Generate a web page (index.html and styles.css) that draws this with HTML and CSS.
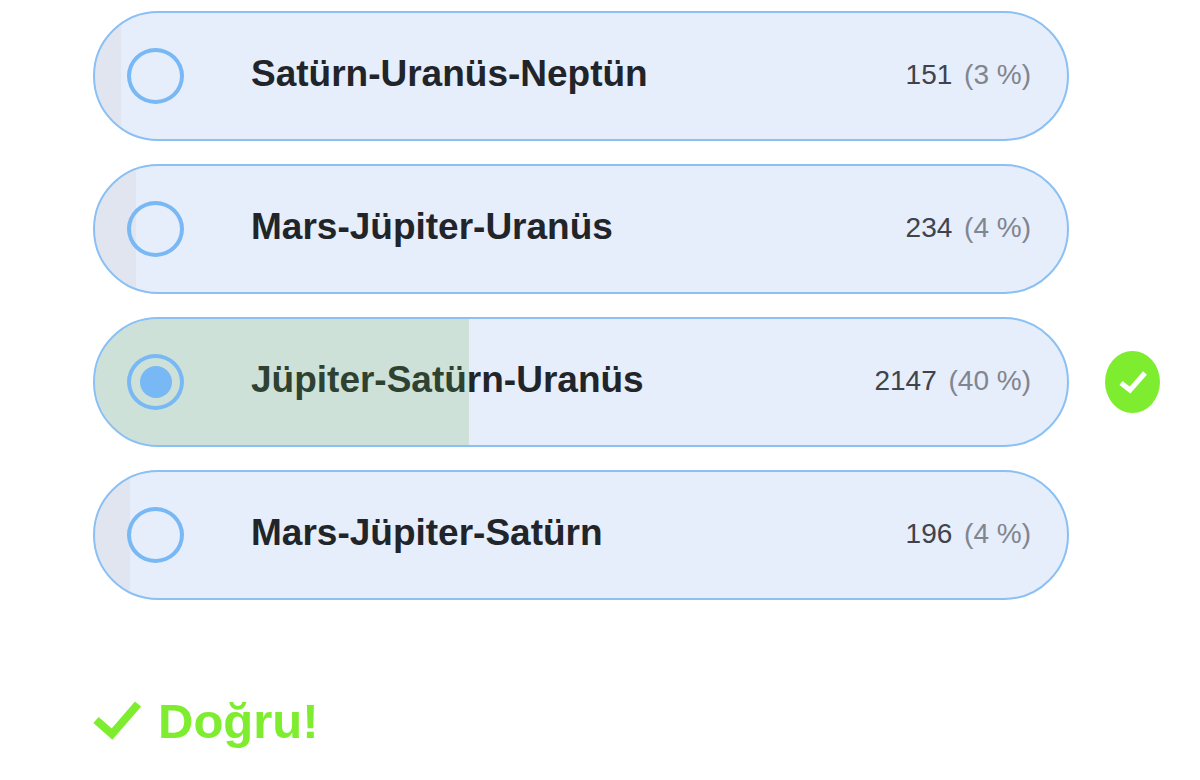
FILE: index.html
```html
<!DOCTYPE html>
<html lang="tr">
<head>
<meta charset="utf-8">
<meta name="viewport" content="width=device-width, initial-scale=1">
<title>Anket</title>
<link rel="stylesheet" href="styles.css">
</head>
<body>
<main class="poll">
  <div class="answers" role="radiogroup">
    <div class="answer">
      <label class="option">
        <input class="option-radio" type="radio" name="answer">
        <span class="option-name">Satürn-Uranüs-Neptün</span>
        <span class="option-votes">151 <span class="option-share">(3 %)</span></span>
        <span class="option-fill" style="width: 2.7%"></span>
      </label>
    </div>
    <div class="answer">
      <label class="option">
        <input class="option-radio" type="radio" name="answer">
        <span class="option-name">Mars-Jüpiter-Uranüs</span>
        <span class="option-votes">234 <span class="option-share">(4 %)</span></span>
        <span class="option-fill" style="width: 4.2%"></span>
      </label>
    </div>
    <div class="answer">
      <label class="option">
        <input class="option-radio" type="radio" name="answer" checked>
        <span class="option-name">Jüpiter-Satürn-Uranüs</span>
        <span class="option-votes">2147 <span class="option-share">(40 %)</span></span>
        <span class="option-fill option-fill-correct" style="width: 38.5%"></span>
      </label>
      <span class="badge">
        <svg class="badge-icon" viewBox="0 0 28 24" aria-hidden="true"><path d="M2 13L11 20L26 3" fill="none" stroke="#fff" stroke-width="5"/></svg>
      </span>
    </div>
    <div class="answer">
      <label class="option">
        <input class="option-radio" type="radio" name="answer">
        <span class="option-name">Mars-Jüpiter-Satürn</span>
        <span class="option-votes">196 <span class="option-share">(4 %)</span></span>
        <span class="option-fill" style="width: 3.6%"></span>
      </label>
    </div>
  </div>
  <p class="result">
    <svg class="result-icon" viewBox="0 0 48 40" aria-hidden="true"><path d="M3 19L19 33L45 3" fill="none" stroke="#7fed2f" stroke-width="8"/></svg>
    Doğru!
  </p>
</main>
</body>
</html>
```

FILE: styles.css
```css
* {
  box-sizing: border-box;
}

body {
  margin: 0;
  background: #fff;
  color: #212529;
  font-family: "Liberation Sans", Arial, sans-serif;
}

.poll {
  padding: 11px 40px 24px 93px;
}

.answers {
  display: grid;
  gap: 23px;
}

.answer {
  display: grid;
  grid-template-columns: 1fr 55px;
  align-items: center;
  column-gap: 36px;
}

.option {
  position: relative;
  display: flex;
  align-items: center;
  min-height: 130px;
  padding: 0 36px 0 32px;
  overflow: hidden;
  border: 2px solid #8ac0f3;
  border-radius: 65px;
  background: #e6edfb;
}

.option-fill {
  position: absolute;
  top: 0;
  bottom: 0;
  left: 0;
  background: rgba(200, 200, 200, 0.2);
}

.option-fill-correct {
  background: rgba(104, 179, 78, 0.2);
}

.option-radio {
  appearance: none;
  position: relative;
  z-index: 1;
  flex: none;
  display: grid;
  place-content: center;
  width: 57px;
  height: 56px;
  margin: 0 67px 0 0;
  border: 4px solid #78b8f5;
  border-radius: 50%;
}

.option-radio:checked::before {
  content: "";
  width: 32px;
  height: 32px;
  border-radius: 50%;
  background: #78b8f5;
}

.option-name {
  flex: 1;
  padding-bottom: 4px;
  font-size: 37px;
  font-weight: 700;
  line-height: 44px;
}

.option-votes {
  padding-bottom: 2px;
  color: #3e434c;
  font-size: 28px;
  line-height: 32px;
}

.option-share {
  margin-left: 4px;
  color: #81858f;
}

.badge {
  display: grid;
  place-content: center;
  height: 62px;
  border-radius: 50%;
  background: #7fed2f;
}

.badge-icon {
  width: 28px;
  height: 24px;
}

.result {
  display: flex;
  align-items: center;
  gap: 17px;
  margin: 93px 0 0;
  color: #7fed2f;
  font-size: 49px;
  font-weight: 700;
  line-height: 56px;
}

.result-icon {
  width: 48px;
  height: 40px;
}
```
